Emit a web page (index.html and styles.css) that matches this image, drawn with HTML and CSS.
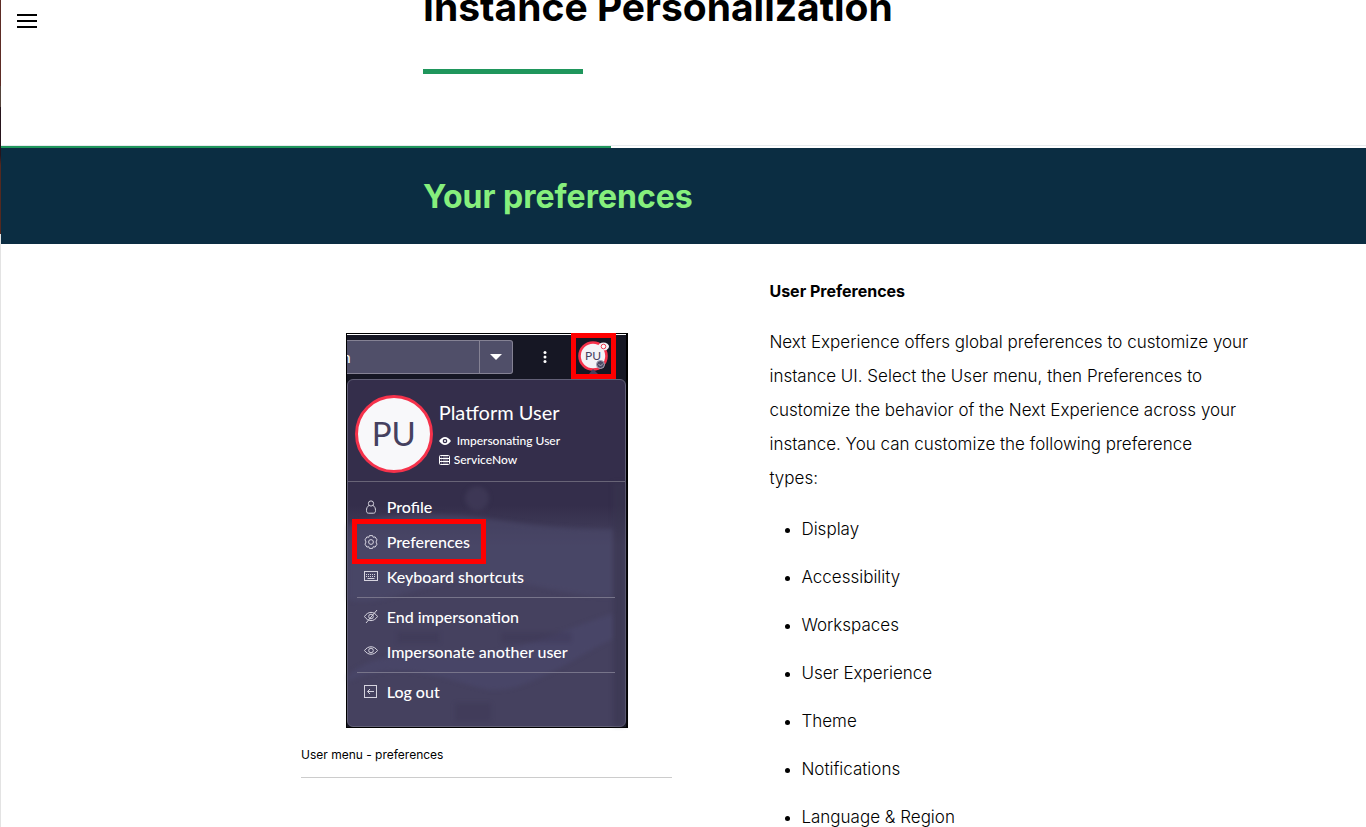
FILE: index.html
```html
<!DOCTYPE html>
<html lang="en">
<head>
<meta charset="utf-8">
<meta name="viewport" content="width=device-width, initial-scale=1">
<title>Instance Personalization</title>
<link rel="stylesheet" href="styles.css">
</head>
<body>
<div class="page">
  <div class="edge"></div>
  <main class="lesson">
    <header class="lesson-header">
      <button class="nav-toggle" type="button" aria-label="Open menu"><svg width="20" height="14" viewBox="0 0 20 14"><path d="M0 0h20v2H0zM0 6h20v2H0zM0 12h20v2H0z"/></svg></button>
      <div class="lesson-title">
        <h1>Instance Personalization</h1>
        <div class="title-rule"></div>
      </div>
    </header>
    <div class="progress"><div class="progress-fill"></div></div>
    <section class="banner"><h2>Your preferences</h2></section>
    <section class="content">
      <figure class="figure">
        <div class="shot">
          <div class="topbar">
            <div class="search"><span class="search-text">n</span><button class="search-drop" type="button" aria-label="Search scope"><svg width="12" height="6" viewBox="0 0 12 6"><path d="M0 0h12L6 6z" fill="#fff"/></svg></button></div>
            <button class="kebab" type="button" aria-label="More"><svg width="4" height="14" viewBox="0 0 4 14" fill="#fff"><circle cx="2" cy="2.500" r="1.500"/><circle cx="2" cy="7" r="1.500"/><circle cx="2" cy="11.500" r="1.500"/></svg></button>
            <button class="user-button" type="button" aria-label="User menu">
              <svg width="35" height="36" viewBox="0 0 35 36">
                <circle cx="17" cy="18" r="13.500" fill="#f3f3f6" stroke="#f5324b" stroke-width="2.600"/>
                <text x="9" y="22" class="mini-initials">PU</text>
                <ellipse cx="27.500" cy="8.500" rx="5.500" ry="4" fill="#f3f3f6"/>
                <circle cx="27.500" cy="8.500" r="2.300" fill="#fff" stroke="#ef3b51"/>
                <circle cx="24.500" cy="26.500" r="4" fill="#4d4b66" stroke="#a9a8b8"/>
                <path d="M22.500 26l2 2 2.500-2.500" fill="none" stroke="#aaa9bb"/>
                <path d="M13 36l4-5 5 5z" fill="#45405e"/>
              </svg>
            </button>
          </div>
          <div class="panel">
            <svg class="waves" viewBox="0 0 279 348" preserveAspectRatio="none" aria-hidden="true">
              <path d="M0 146C30 134 70 134 110 136S180 150 267 150V218C220 220 160 193 110 202S30 228 0 221z" fill="#4b4a6a" opacity=".6"/>
              <path d="M0 303C50 280 95 300 135 310S225 280 267 260V235C225 248 155 280 112 278S28 272 0 297z" fill="#4b4a70" opacity=".5"/>
              <path d="M267 103v245h12V103z" fill="#39344f" opacity=".55"/>
              <circle cx="130" cy="119" r="12" fill="#4a4663" opacity=".4"/>
              <path d="M50 254h42v10H50zM155 254h70v10h-70zM108 325h36v18h-36z" fill="#37324e" opacity=".3"/>
            </svg>
            <div class="user">
              <div class="avatar">PU</div>
              <div class="user-info">
                <div class="user-name">Platform User</div>
                <div class="user-line gap-wide"><svg width="12" height="8" viewBox="0 0 12 8"><path d="M0 4Q6-4 12 4Q6 12 0 4z" fill="#fff"/><circle cx="6" cy="4" r="2.300" fill="#37314f"/><circle cx="6" cy="4" r="1" fill="#fff"/></svg><span>Impersonating User</span></div>
                <div class="user-line"><svg width="11" height="10" viewBox="0 0 11 10" fill="none" stroke="#fff"><rect x=".5" y=".5" width="10" height="9" rx="1"/><path d="M.5 3.500h10M.5 6.500h10"/><path d="M2 2h1M4 2h5M2 5h1M4 5h5M2 8h1M4 8h5" stroke-width=".5"/></svg><span>ServiceNow</span></div>
              </div>
            </div>
            <div class="menu">
              <button type="button"><svg width="14" height="14" viewBox="0 0 14 14"><circle cx="7" cy="3.500" r="2.600"/><path d="M5 5.500C3 6.500 2.500 8.500 2.500 10.500c0 2 .8 2.700 2 2.700h5c1.200 0 2-.7 2-2.700 0-2-.5-4-2.500-5"/></svg>Profile</button>
              <button type="button"><svg width="14" height="14" viewBox="0 0 14 14"><circle cx="7" cy="7" r="2.400"/><path d="M5.400.6h3.200l.6 1.700 1.900-.4 1.900 2.900L12 7l1 2.200-1.900 2.900-1.900-.4-.6 1.700H5.400l-.6-1.700-1.900.4L1 9.200 2 7 1 4.800l1.900-2.900 1.900.4z"/></svg>Preferences</button>
              <button type="button"><svg width="14" height="14" viewBox="0 0 14 14"><rect x=".5" y="1.500" width="13" height="9"/><path d="M2 4.500h10M2 6.500h10" stroke-dasharray="1 1"/><path d="M3.500 8.500h7"/></svg>Keyboard shortcuts</button>
              <hr>
              <button type="button"><svg width="14" height="14" viewBox="0 0 14 14"><path d="M.5 6.500C4 1 10 1 13.500 6.500 10 12 4 12 .5 6.500zM13 0L2 13"/><circle cx="7" cy="6.500" r="2.300"/></svg>End impersonation</button>
              <button type="button"><svg width="14" height="14" viewBox="0 0 14 14"><path d="M.5 5.500C4 .5 10 .5 13.500 5.500 10 10.500 4 10.500.5 5.500z"/><circle cx="7" cy="5.500" r="2.300"/></svg>Impersonate another user</button>
              <hr>
              <button type="button"><svg width="14" height="14" viewBox="0 0 14 14"><rect x=".5" y=".5" width="12" height="12"/><path d="M10 6.500H3.500M6 4L3.500 6.500 6 9"/></svg>Log out</button>
            </div>
          </div>
          <div class="callout"></div>
        </div>
        <figcaption>User menu - preferences</figcaption>
      </figure>
      <article class="copy">
        <h3>User Preferences</h3>
        <p>Next Experience offers global preferences to customize your<br>instance UI. Select the User menu, then Preferences to<br>customize the behavior of the Next Experience across your<br>instance. You can customize the following preference<br>types:</p>
        <ul>
          <li>Display</li>
          <li>Accessibility</li>
          <li>Workspaces</li>
          <li>User Experience</li>
          <li>Theme</li>
          <li>Notifications</li>
          <li>Language &amp; Region</li>
        </ul>
      </article>
    </section>
  </main>
</div>
</body>
</html>
```
FILE: styles.css
```css
* { box-sizing: border-box; }
body {
  margin: 0;
  color: #000;
  background: #fff;
  font-family: "Century Gothic", Inter, sans-serif;
}
button { margin: 0; padding: 0; border: 0; background: none; color: inherit; font: inherit; }
svg { display: block; flex: none; }

.page { display: flex; height: 100vh; overflow: hidden; }
.edge {
  width: 1px;
  background: linear-gradient(#5c2b24 86px, #54443c 86px 107px, #26141c 107px 155px, #55291f 165px 234px, #e3e3e3 234px);
}
.lesson { flex: 1; min-width: 0; }

.lesson-header { display: flex; align-items: flex-start; height: 145px; overflow: hidden; }
.nav-toggle { padding: 14px 16px; }
.lesson-title { margin-left: 370px; }
.lesson-title h1 { margin: -18px 0 0; font-size: 39px; line-height: 50px; white-space: nowrap; }
.title-rule { width: 160px; height: 5px; margin-top: 37px; background: #1f965c; }
.progress { height: 3px; border-top: 1px solid #e6eaed; }
.progress-fill { width: 610px; max-width: 100%; height: 2px; background: #1f965c; }

.banner { padding: 25px 16px 23px 422px; background: #0b2d42; }
.banner h2 { margin: 0; color: #86ef7d; font-size: 32px; line-height: 48px; }

.content {
  display: grid;
  grid-template-columns: 371fr 496fr;
  gap: 97px;
  padding: 30px 100px 0 300px;
}
.figure { margin: 59px 0 0; }
.figure figcaption { padding: 18px 0 13px; border-bottom: 1px solid #ccc; font-size: 12px; line-height: 18px; }

.shot {
  position: relative;
  width: 282px;
  margin: 0 auto;
  border: 1px solid #000;
  border-right-width: 2px;
  background: #161724;
  color: #fff;
  font-family: Lato, sans-serif;
}
.topbar { display: flex; align-items: center; height: 45px; border-top: 1px solid #fff; }
.search {
  display: flex;
  align-items: stretch;
  justify-content: space-between;
  width: 166px;
  height: 34px;
  border: 1px solid #858294;
  border-left: 0;
  border-radius: 0 3px 3px 0;
  background: #504f69;
}
.search-text { font-size: 16px; line-height: 32px; text-indent: -5px; overflow: hidden; }
.search-drop { display: flex; align-items: center; justify-content: center; width: 33px; border-left: 1px solid #858294; }
.kebab { margin-left: 30px; }
.user-button { position: absolute; top: -1px; left: 224px; z-index: 2; border: 5px solid #f00; }
.mini-initials { fill: #45415e; font: 12px Lato, sans-serif; }

.panel {
  position: relative;
  border: 1px solid #626077;
  border-radius: 6px;
  background: linear-gradient(#342e4b 0 125px, #45415f 165px);
}
.waves { position: absolute; inset: 0; width: 100%; height: 100%; filter: blur(2px); }
.user { position: relative; display: flex; gap: 6px; height: 102px; padding: 15px 7px 0; border-bottom: 1px solid #686477; }
.avatar {
  width: 78px;
  height: 78px;
  border: 3px solid #f5324b;
  border-radius: 50%;
  background: #f8f8fa;
  color: #45415f;
  font-size: 33px;
  line-height: 70px;
  text-align: center;
}
.user-info { padding-top: 3px; }
.user-name { margin-bottom: 5px; font-size: 20px; line-height: 28px; }
.user-line { display: flex; align-items: center; gap: 4px; font-size: 12px; line-height: 19px; font-weight: 500; }
.gap-wide { gap: 6px; }
.menu { position: relative; padding: 8px 10px 16px 9px; }
.menu button { display: flex; align-items: center; gap: 9px; width: 100%; height: 35px; padding: 0 0 2px 7px; font-size: 16px; font-weight: 500; text-align: left; }
.menu svg { fill: none; stroke: #d6d4df; stroke-width: 1; }
.menu hr { height: 1px; margin: 2px 0; border: 0; background: #77748a; }
.callout { position: absolute; top: 185px; left: 5px; width: 134px; height: 45px; border: 5px solid #f00; }

.copy { font-size: 17px; line-height: 34px; font-weight: 300; white-space: nowrap; }
.copy h3 { margin: 0 0 17px; font-size: 16px; line-height: 34px; font-weight: 700; }
.copy p { margin: 0; }
.copy ul { margin: 17px 0 0; padding-left: 32px; }
.copy li { margin-bottom: 14px; }
.copy li::marker { font-size: 14px; }
```
